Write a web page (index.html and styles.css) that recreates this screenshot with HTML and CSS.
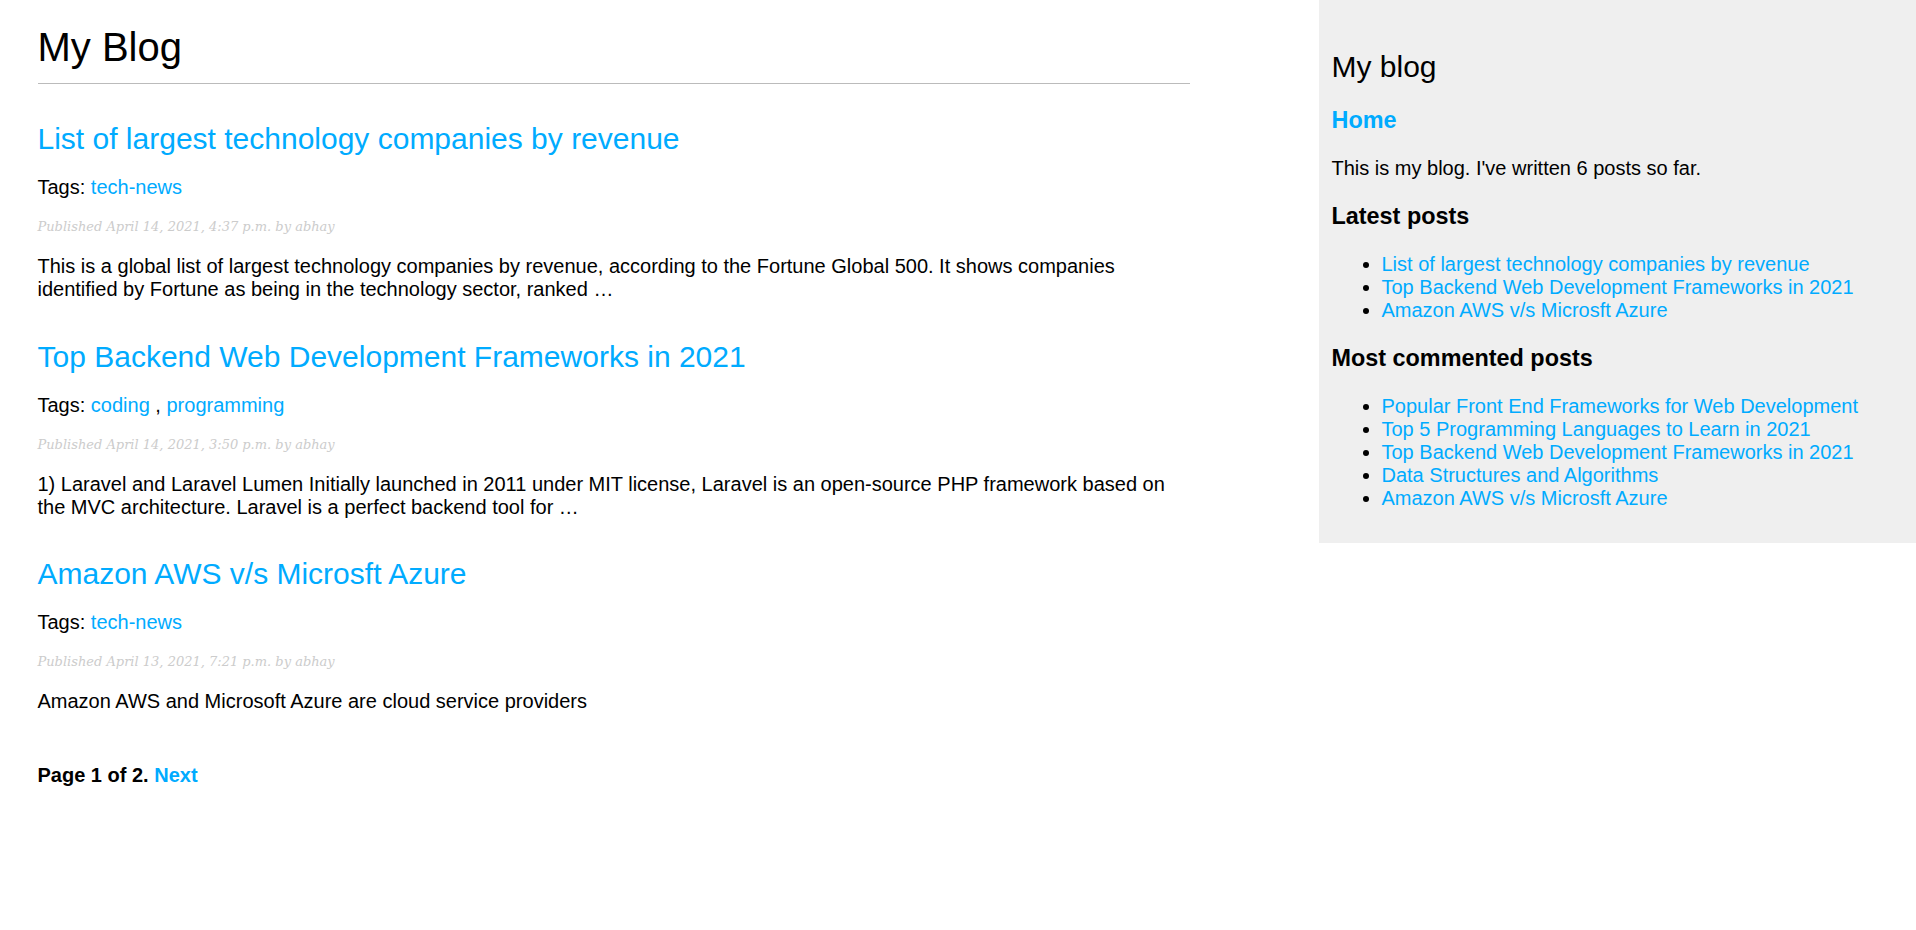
FILE: index.html
```html
<!DOCTYPE html>
<html lang="en">
<head>
<meta charset="utf-8">
<title>My Blog</title>
<link rel="stylesheet" href="styles.css">
</head>
<body>
<div class="content">
  <h1 class="page-title">My Blog</h1>

  <h2 class="post-title"><a href="#">List of largest technology companies by revenue</a></h2>
  <p class="tags">Tags: <a href="#">tech-news</a></p>
  <p class="date">Published April 14, 2021, 4:37 p.m. by abhay</p>
  <p class="excerpt">This is a global list of largest technology companies by revenue, according to the Fortune Global 500. It shows companies identified by Fortune as being in the technology sector, ranked …</p>

  <h2 class="post-title"><a href="#">Top Backend Web Development Frameworks in 2021</a></h2>
  <p class="tags">Tags: <a href="#">coding</a> , <a href="#">programming</a></p>
  <p class="date">Published April 14, 2021, 3:50 p.m. by abhay</p>
  <p class="excerpt">1) Laravel and Laravel Lumen Initially launched in 2011 under MIT license, Laravel is an open-source PHP framework based on the MVC architecture. Laravel is a perfect backend tool for …</p>

  <h2 class="post-title"><a href="#">Amazon AWS v/s Microsft Azure</a></h2>
  <p class="tags">Tags: <a href="#">tech-news</a></p>
  <p class="date">Published April 13, 2021, 7:21 p.m. by abhay</p>
  <p class="excerpt">Amazon AWS and Microsoft Azure are cloud service providers</p>

  <div class="pagination">
    <span class="step-links"><span class="current">Page 1 of 2.</span> <a href="#">Next</a></span>
  </div>
</div>

<div class="sidebar">
  <h2 class="sidebar-title">My blog</h2>
  <h3 class="sidebar-heading"><a href="#">Home</a></h3>
  <p class="sidebar-text">This is my blog. I've written 6 posts so far.</p>
  <h3 class="sidebar-heading">Latest posts</h3>
  <ul class="post-list">
    <li><a href="#">List of largest technology companies by revenue</a></li>
    <li><a href="#">Top Backend Web Development Frameworks in 2021</a></li>
    <li><a href="#">Amazon AWS v/s Microsft Azure</a></li>
  </ul>
  <h3 class="sidebar-heading">Most commented posts</h3>
  <ul class="post-list">
    <li><a href="#">Popular Front End Frameworks for Web Development</a></li>
    <li><a href="#">Top 5 Programming Languages to Learn in 2021</a></li>
    <li><a href="#">Top Backend Web Development Frameworks in 2021</a></li>
    <li><a href="#">Data Structures and Algorithms</a></li>
    <li><a href="#">Amazon AWS v/s Microsft Azure</a></li>
  </ul>
</div>
</body>
</html>
```

FILE: styles.css
```css
body {
  margin: 0;
  padding: 0;
  font-family: "Liberation Sans", Arial, Helvetica, sans-serif;
  font-size: 20px;
  color: #000;
  background: #fff;
}

a {
  color: #00abff;
  text-decoration: none;
}

p {
  margin: 20px 0;
}

.content {
  float: left;
  width: calc(60% + 3px);
  padding: 0 0 0 37.5px;
}

.page-title {
  font-size: 40px;
  font-weight: normal;
  margin: 25px 0 26.8px;
  padding: 0 0 12.5px 0;
  border-bottom: 1px solid #bbb;
}

.post-title,
.sidebar-title {
  font-size: 30px;
  font-weight: normal;
  margin: 37.5px 0 0;
}

.post-title {
  margin-top: 38.5px;
}

.date {
  color: #ccc;
  font-family: Georgia, "DejaVu Serif", serif;
  font-size: 13px;
  line-height: 16px;
  font-style: italic;
}

.pagination {
  margin: 51px 0;
  font-weight: bold;
}

.sidebar {
  float: right;
  width: 572px;
  padding: 12.5px;
  background: #efefef;
}

.sidebar-heading {
  font-size: 23.4px;
  font-weight: bold;
  margin: 23px 0;
}

.post-list {
  margin: 20px 0;
  padding-left: 50px;
}
```
